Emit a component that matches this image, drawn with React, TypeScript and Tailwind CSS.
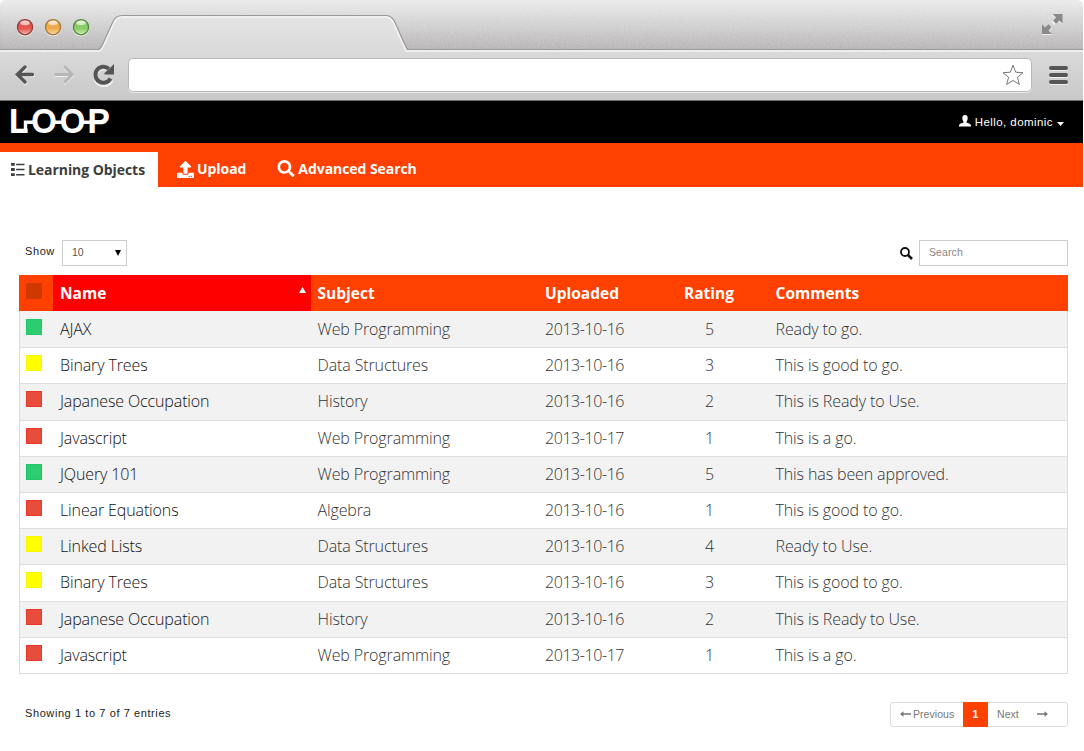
import React from "react";
import { FaUpload, FaSearch } from "react-icons/fa";

type Status = "green" | "yellow" | "red";

interface LearningObject {
  status: Status;
  name: string;
  subject: string;
  uploaded: string;
  rating: number;
  comments: string;
}

const objects: LearningObject[] = [
  { status: "green", name: "AJAX", subject: "Web Programming", uploaded: "2013-10-16", rating: 5, comments: "Ready to go." },
  { status: "yellow", name: "Binary Trees", subject: "Data Structures", uploaded: "2013-10-16", rating: 3, comments: "This is good to go." },
  { status: "red", name: "Japanese Occupation", subject: "History", uploaded: "2013-10-16", rating: 2, comments: "This is Ready to Use." },
  { status: "red", name: "Javascript", subject: "Web Programming", uploaded: "2013-10-17", rating: 1, comments: "This is a go." },
  { status: "green", name: "JQuery 101", subject: "Web Programming", uploaded: "2013-10-16", rating: 5, comments: "This has been approved." },
  { status: "red", name: "Linear Equations", subject: "Algebra", uploaded: "2013-10-16", rating: 1, comments: "This is good to go." },
  { status: "yellow", name: "Linked Lists", subject: "Data Structures", uploaded: "2013-10-16", rating: 4, comments: "Ready to Use." },
  { status: "yellow", name: "Binary Trees", subject: "Data Structures", uploaded: "2013-10-16", rating: 3, comments: "This is good to go." },
  { status: "red", name: "Japanese Occupation", subject: "History", uploaded: "2013-10-16", rating: 2, comments: "This is Ready to Use." },
  { status: "red", name: "Javascript", subject: "Web Programming", uploaded: "2013-10-17", rating: 1, comments: "This is a go." },
];

const statusColor: Record<Status, string> = {
  green: "bg-[#2ecc71] border-[#1fc866]",
  yellow: "bg-[#ffff00] border-[#fbf500]",
  red: "bg-[#e74c3c] border-[#e8382a]",
};

const columns = "grid grid-cols-[33px_258px_228px_139px_91px_1fr]";

function WindowButton({ rim, dark, light }: { rim: string; dark: string; light: string }) {
  const id = "lamp" + rim.slice(1);
  return (
    <svg width="18" height="19" viewBox="0 0 18 19">
      <defs>
        <linearGradient id={id} x1="0" y1="0" x2="0" y2="1">
          <stop offset="0" stopColor={light} />
          <stop offset="0.3" stopColor={dark} />
          <stop offset="0.58" stopColor={dark} />
          <stop offset="1" stopColor={light} />
        </linearGradient>
      </defs>
      <circle cx="9" cy="10" r="8.4" fill="#fff" opacity="0.7" />
      <circle cx="9" cy="9.2" r="7.6" fill={`url(#${id})`} stroke={rim} strokeWidth="1.3" />
      <ellipse cx="9" cy="5" rx="4.6" ry="2.2" fill="#fff" opacity="0.6" />
    </svg>
  );
}

function TabStrip() {
  return (
    <svg className="absolute inset-0" width="1084" height="101" viewBox="0 0 1084 101">
      <defs>
        <linearGradient id="strip" x1="0" y1="0" x2="0" y2="1">
          <stop offset="0" stopColor="#ebebeb" />
          <stop offset="0.45" stopColor="#d4d3d3" />
          <stop offset="1" stopColor="#b6b3b4" />
        </linearGradient>
        <linearGradient id="bar" gradientUnits="userSpaceOnUse" x1="0" y1="16" x2="0" y2="100">
          <stop offset="0" stopColor="#e4e4e4" />
          <stop offset="0.42" stopColor="#dadada" />
          <stop offset="1" stopColor="#c8c8c8" />
        </linearGradient>
        <filter id="grain" x="0" y="0" width="100%" height="100%">
          <feTurbulence type="fractalNoise" baseFrequency="0.7" numOctaves="2" seed="4" />
          <feColorMatrix values="0 0 0 0 1  0 0 0 0 1  0 0 0 0 1  0.7 0 0 0 -0.24" />
        </filter>
      </defs>
      <path d="M0 50V6Q0 0 6 0H1077Q1083 0 1083 6V50Z" fill="url(#strip)" />
      <rect x="2" y="1" width="1080" height="48" filter="url(#grain)" opacity="0.5" />
      <path d="M0 50H98Q100 50 102 46L113 22Q116 16 122 16H386Q391 16 394 21L407 50H1083V100H0Z" fill="url(#bar)" />
      <path d="M0 51H98Q101 51 103 47L114 23Q117 17 122 17H386Q390 17 393 22L406 51H1083" fill="none" stroke="#f5f5f5" strokeWidth="1.4" />
      <path d="M0 49.5H98Q100 49.5 102 45.5L113 21.5Q116 15.5 122 15.5H386Q391 15.5 394 20.5C399 30 403 42 407.500 49.500H1083" fill="none" stroke="#999898" strokeWidth="1.1" />
      <path d="M0 100.500H1083" stroke="#707070" strokeWidth="1" />
    </svg>
  );
}

function BrowserChrome() {
  return (
    <header className="relative h-[101px] w-full">
      <TabStrip />
      <div className="relative flex h-[50px] items-start justify-between pr-[20px] pl-4">
        <div className="flex gap-[10px] pt-[17.500px]">
          <WindowButton rim="#8c3d38" dark="#e4574f" light="#f7b7ae" />
          <WindowButton rim="#a1743a" dark="#edaa4c" light="#fbe0a4" />
          <WindowButton rim="#568640" dark="#8acb68" light="#d2f3b0" />
        </div>
        <svg className="mt-[12px]" width="24" height="24" viewBox="0 0 24 24">
          <path d="M12 3H22V12L18.500 9L14.500 13L11.500 10L15.500 6ZM2 13.500L5.500 17L9.500 13L12.500 16L9 19.500L12 23H2Z" fill="#fff" opacity=".7" />
          <path d="M12.500 2H22.500V11.500L19.300 8.500L16 11.800L13 8.800L16 5.500ZM2 12.500L5.200 15.500L8.500 12.300L11.500 15.300L8.500 18.700L12 22H2Z" fill="#8a8a8a" />
        </svg>
      </div>
      <div className="relative flex h-[50px] items-center pl-[15px]">
        <svg width="22" height="22" viewBox="0 0 22 22">
          <path d="M10.500 4L2.800 11.500L10.500 19M3.500 11.500H18" fill="none" stroke="#f2f2f2" strokeWidth="3.500" strokeLinecap="round" />
          <path d="M10 3L2.300 10.500L10 18M3 10.500H17.500" fill="none" stroke="#555" strokeWidth="3.300" strokeLinecap="round" />
        </svg>
        <svg className="ml-[16px]" width="22" height="22" viewBox="0 0 22 22">
          <path d="M12 4L19.500 11.500L12 19M19 11.500H3" fill="none" stroke="#eee" strokeWidth="3" strokeLinecap="round" />
          <path d="M12 3L19.200 10.500L12 18M18.500 10.500H2.500" fill="none" stroke="#b7b7b7" strokeWidth="3" strokeLinecap="round" />
        </svg>
        <svg className="ml-4" width="25" height="24" viewBox="0 0 25 24">
          <path d="M20.800 16A8.600 8.600 0 1 1 18 5.500" fill="none" stroke="#eee" strokeWidth="4" transform="translate(0 1.200)" />
          <path d="M19.500 15.500A8 8 0 1 1 17.800 5.800" fill="none" stroke="#555" strokeWidth="4" />
          <path d="M23 1V11.500H13.500V10L20 4Z" fill="#555" />
        </svg>
        <div className="ml-[12px] flex h-[34px] w-[904px] items-center justify-end rounded-[5px] border border-[#b8b8b8] bg-white pr-[7px] shadow-[0_1px_0_#e9e9e9]">
          <svg width="22" height="22" viewBox="0 0 22 22">
            <path d="M11 1.200L13.700 8.200L21 8.700L15.400 13.300L17.400 20.400L11 16.500L4.600 20.400L6.600 13.300L1 8.700L8.300 8.200Z" fill="#fff" stroke="#777" strokeWidth="1" strokeLinejoin="round" />
          </svg>
        </div>
        <div className="ml-[17px] flex w-[19px] flex-col gap-[3px]">
          {[0, 1, 2].map((n) => (
            <span key={n} className="h-[4px] rounded-full bg-[#555] shadow-[0_1px_0_#eeeeee]" />
          ))}
        </div>
      </div>
      <div className="h-px" />
    </header>
  );
}

function Logo() {
  return (
    <svg width="110" height="40" viewBox="-4 -7 110 40" fontFamily="'Liberation Sans', Arial, sans-serif" fontSize="31" fill="#fff" stroke="#fff" strokeWidth="1.900">
      <text x="-.500" y="24" textLength="18" lengthAdjust="spacingAndGlyphs">L</text>
      <text x="22" y="24" textLength="24" lengthAdjust="spacingAndGlyphs">O</text>
      <text x="50.500" y="24" textLength="24" lengthAdjust="spacingAndGlyphs">O</text>
      <text x="78" y="24" textLength="21.500" lengthAdjust="spacingAndGlyphs">P</text>
      <path d="M15.500 24.800V14.300H23M45 14.300H52M73 14.300H82" fill="none" strokeWidth="3.400" />
    </svg>
  );
}

function TopBar() {
  return (
    <div className="flex h-[42px] w-[1083px] items-start justify-between bg-black pr-[19px] pl-[6px]">
      <Logo />
      <div className="flex items-center pt-[13px] text-[11.500px] leading-[16px] tracking-[0.430px] text-white">
        <svg className="mr-[4px] mb-[2px]" width="12" height="12" viewBox="0 0 12 12" fill="#fff">
          <path d="M6 0C8.400 0 8.900 1.700 8.600 4C8.400 5.400 7.700 6.100 7.500 6.600V7.500C8.800 8.300 11.800 8.700 12 10.300V11.500H0V10.300C.2 8.700 3.200 8.300 4.500 7.500V6.600C4.300 6.100 3.600 5.400 3.400 4C3.100 1.700 3.600 0 6 0Z" />
        </svg>
        <span>Hello, dominic</span>
        <svg className="mt-[3px] ml-[4px]" width="7" height="4" viewBox="0 0 7 4"><path d="M0 0H7L3.500 4Z" fill="#fff" /></svg>
      </div>
    </div>
  );
}

function Navigation() {
  return (
    <nav className="flex h-[44px] w-[1083px] items-end bg-[#ff4000] font-['Open_Sans',sans-serif] text-[14px] leading-[20px] font-bold tracking-[-0.060px] text-white">
      <div className="flex h-[35px] w-[158px] items-center bg-white pl-[11px] text-[#3d3d3d]">
        <svg className="mr-[3px] shrink-0" width="14" height="13" viewBox="0 0 15 14" fill="#3d3d3d">
          <path d="M0 0H4V3H0ZM0 5.500H4V8.500H0ZM0 11H4V14H0ZM5.500 .8H14.500V2.500H5.500ZM5.500 6.200H14.500V7.900H5.500ZM5.500 11.800H14.500V13.500H5.500Z" />
        </svg>
        <span className="whitespace-nowrap">Learning Objects</span>
      </div>
      <div className="ml-[19px] flex h-[36px] items-center gap-[3px]">
        <FaUpload className="size-[17px]" />
        <span className="pb-px">Upload</span>
      </div>
      <div className="ml-[31px] flex h-[36px] items-center gap-[3px]">
        <FaSearch className="size-[18px] pb-px" />
        <span className="pb-px">Advanced Search</span>
      </div>
    </nav>
  );
}

function Controls() {
  return (
    <div className="flex h-[26px] w-[1049px] items-center justify-between pl-[6px]">
      <div className="flex items-center">
        <span className="w-[37px] pb-[3px] text-[11px] tracking-[0.600px] text-[#222]">Show</span>
        <div className="flex h-[26px] w-[65px] items-center justify-between border border-[#ccc] px-[5px] pl-[9px] text-[10.500px] text-[#555]">
          <span>10</span>
          <svg width="6" height="6" viewBox="0 0 6 6"><path d="M0 0H6L3 6Z" fill="#000" /></svg>
        </div>
      </div>
      <div className="flex items-center">
        <svg className="mr-[6px]" width="13" height="13" viewBox="0 0 13 13" fill="none" stroke="#111">
          <circle cx="5" cy="5" r="4" strokeWidth="1.800" />
          <path d="M8 8L12 12" strokeWidth="2.500" />
        </svg>
        <div className="flex h-[26px] w-[149px] items-center border border-[#ccc] pl-[9px] text-[10.500px] tracking-[0.100px] text-[#888]">Search</div>
      </div>
    </div>
  );
}

function ObjectTable() {
  return (
    <div className="mt-[9px] w-[1049px] border-x border-b border-[#dedede] font-['Open_Sans',sans-serif] text-[16px]">
      <div className={columns + " -mx-px h-[36px] w-[1049px] bg-[#ff4000] pl-px text-[15.500px] leading-[36px] font-bold text-white"}>
        <div className="pt-[8px] pl-[6px]"><div className="h-[16px] w-[16px] bg-[#cf3800]" /></div>
        <div className="flex justify-between bg-[#ff0000] pr-[5px] pl-[7px]">
          <span>Name</span>
          <svg className="mt-[12px]" width="7" height="6" viewBox="0 0 7 6"><path d="M3.500 0L7 6H0Z" fill="#fff" /></svg>
        </div>
        <div className="pl-[6.500px]">Subject</div>
        <div className="pl-[6px]">Uploaded</div>
        <div className="pl-[6px]">Rating</div>
        <div className="pl-[6.500px]">Comments</div>
      </div>
      {objects.map((o, i) => (
        <div
          key={i}
          className={
            columns +
            " h-[36.200px] font-light tracking-[-0.120px] text-[#333] " +
            (i === 0 ? "leading-[36px] " : "border-t border-[#dedede] leading-[34.500px] ") +
            (i % 2 === 0 ? "bg-[#f2f2f2]" : "bg-white")
          }
        >
          <div className={(i === 0 ? "pt-[8px]" : "pt-[7px]") + " pl-[6px]"}><div className={"h-[16px] w-[16px] border " + statusColor[o.status]} /></div>
          <div className="pl-[7px] text-[#111]">{o.name}</div>
          <div className="pl-[6.500px]">{o.subject}</div>
          <div className="pl-[6px] tracking-[-0.430px]">{o.uploaded}</div>
          <div className="pl-[27px]">{o.rating}</div>
          <div className="pl-[6.500px]">{o.comments}</div>
        </div>
      ))}
    </div>
  );
}

function Arrow({ flip }: { flip?: boolean }) {
  return (
    <svg className={flip ? "rotate-180" : ""} width="11" height="6" viewBox="0 0 11 6">
      <path d="M0 3L3.500 .3V2.200H11V3.800H3.500V5.700Z" fill="#777" />
    </svg>
  );
}

function Footer() {
  return (
    <div className="mt-[28px] flex h-[25px] w-[1049px] items-center justify-between pl-[6px]">
      <span className="pb-[2px] text-[11px] tracking-[0.590px] text-[#222]">Showing 1 to 7 of 7 entries</span>
      <div className="flex h-[25px] w-[178px] items-center rounded-[3px] border border-[#ddd] text-[10.500px] tracking-[0.060px] text-[#777]">
        <div className="flex w-[72px] items-center gap-[2px] pl-[9px]">
          <Arrow />
          <span>Previous</span>
        </div>
        <div className="-my-px h-[25px] w-[25px] bg-[#ff4000] text-center leading-[25px] font-bold text-white">1</div>
        <div className="flex flex-1 items-center gap-[18px] pl-[9px]">
          <span>Next</span>
          <Arrow flip />
        </div>
      </div>
    </div>
  );
}

export default function App() {
  return (
    <div className="h-[751px] w-[1084px] overflow-hidden bg-white font-['Liberation_Sans',Arial,sans-serif]">
      <BrowserChrome />
      <TopBar />
      <Navigation />
      <main className="pt-[53px] pl-[19px]">
        <Controls />
        <ObjectTable />
        <Footer />
      </main>
    </div>
  );
}
